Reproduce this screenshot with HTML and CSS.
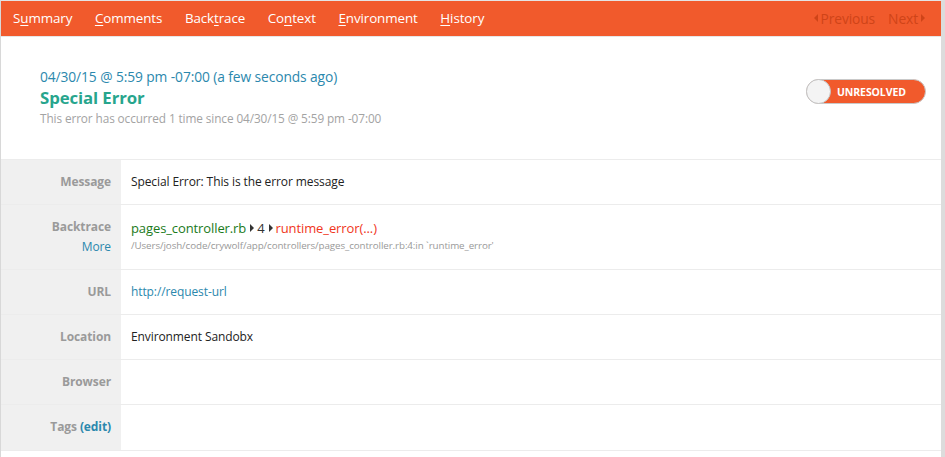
FILE: index.html
```html
<!DOCTYPE html>
<html>
<head>
<meta charset="utf-8">
<link rel="stylesheet" href="styles.css">
</head>
<body>
<div class="page">
  <nav class="tabs">
    <div class="tab-list">
      <a class="tab">S<u>u</u>mmary</a>
      <a class="tab"><u>C</u>omments</a>
      <a class="tab">Back<u>t</u>race</a>
      <a class="tab">Co<u>n</u>text</a>
      <a class="tab"><u>E</u>nvironment</a>
      <a class="tab"><u>H</u>istory</a>
    </div>
    <div class="pager">
      <span class="pager-link"><span class="tri tri-left"></span>Previous</span>
      <span class="pager-link">Next<span class="tri tri-right"></span></span>
    </div>
  </nav>
  <section class="summary">
    <div class="summary-text">
      <div class="when">04/30/15 @ 5:59 pm -07:00 (a few seconds ago)</div>
      <h1 class="title">Special Error</h1>
      <div class="occurred">This error has occurred 1 time since 04/30/15 @ 5:59 pm -07:00</div>
    </div>
    <div class="toggle">
      <span class="knob"></span>
      <span class="toggle-label">UNRESOLVED</span>
    </div>
  </section>
  <div class="details">
    <div class="row">
      <div class="label">Message</div>
      <div class="value">Special Error: This is the error message</div>
    </div>
    <div class="row row-tall">
      <div class="label">Backtrace<br><a class="more">More</a></div>
      <div class="value">
        <div class="trace"><span class="file">pages_controller.rb</span><span class="tri tri-right dark"></span><span class="line">4</span><span class="tri tri-right dark"></span><span class="method">runtime_error(...)</span></div>
        <div class="path">/Users/josh/code/crywolf/app/controllers/pages_controller.rb:4:in `runtime_error'</div>
      </div>
    </div>
    <div class="row">
      <div class="label">URL</div>
      <div class="value"><a class="link">http://request-url</a></div>
    </div>
    <div class="row">
      <div class="label">Location</div>
      <div class="value">Environment Sandobx</div>
    </div>
    <div class="row">
      <div class="label">Browser</div>
      <div class="value"></div>
    </div>
    <div class="row">
      <div class="label">Tags <a class="edit">(edit)</a></div>
      <div class="value"></div>
    </div>
  </div>
</div>
</body>
</html>
```

FILE: styles.css
```css
* { box-sizing: border-box; }
html, body { margin: 0; padding: 0; background: #fff; }
body {
  font-family: "Open Sans", "Liberation Sans", sans-serif;
  font-size: 12px;
  color: #222;
}
.page {
  width: 945px;
  height: 457px;
  border-top: 1px solid #e4e4e4;
  border-left: 1px solid #d8d8d8;
  border-right: 4px solid #dcdcdc;
  overflow: hidden;
}
.tabs {
  height: 36px;
  background: #f15a2c;
  display: flex;
  align-items: center;
  justify-content: space-between;
  padding: 0 16px 1px 12px;
  border-bottom: 1px solid #e6e6e6;
}
.tab-list { display: flex; gap: 0; }
.tab {
  color: #fff;
  font-size: 13.4px;
  font-weight: 500;
  letter-spacing: -0.1px;
  margin-right: 22.6px;
  text-decoration: none;
}
.tab u { text-decoration: underline; text-underline-offset: 2px; }
.pager { display: flex; gap: 13px; color: #cf4418; font-size: 13.8px; letter-spacing: -0.1px; }
.pager-link { display: flex; align-items: center; }
.tri {
  display: inline-block;
  width: 0; height: 0;
  border-top: 4px solid transparent;
  border-bottom: 4px solid transparent;
}
.tri-left { border-right: 4px solid #cf4418; margin-right: 3px; }
.tri-right { border-left: 4px solid #cf4418; margin-left: 3px; }
.tri.dark { border-left-color: #333; margin: 0 3px 0 4px; }

.summary {
  height: 123px;
  display: flex;
  align-items: flex-start;
  justify-content: space-between;
  padding: 0 15px 0 39px;
  border-bottom: 1px solid #ececec;
}
.summary-text { margin-top: 30px; }
.when { color: #2b88ad; font-size: 13.8px; line-height: 20px; letter-spacing: -0.1px; }
.title { margin: 0; color: #27a58d; font-size: 16.8px; font-weight: 700; line-height: 21px; letter-spacing: -0.1px; }
.occurred { color: #a3a3a3; font-size: 11.8px; line-height: 20px; letter-spacing: -0.1px; }

.toggle {
  width: 120px;
  height: 25px;
  border-radius: 13px;
  background: #f15a2c;
  border: 1px solid #c9c9c9;
  display: flex;
  align-items: center;
  margin-top: 42px;
}
.knob {
  width: 25px; height: 25px;
  border-radius: 50%;
  background: #f4f4f4;
  border: 1px solid #c4c4c4;
  margin-left: -1px;
}
.toggle-label { color: #fff; font-weight: 700; font-size: 10.5px; margin-left: 6px; letter-spacing: -0.1px; }

.details { border-bottom: 1px solid #ececec; }
.row {
  display: flex;
  height: 45px;
  border-bottom: 1px solid #ececec;
}
.row:last-child { border-bottom: none; }
.row-tall { height: 65px; }
.label {
  width: 120px;
  background: #f0f0f0;
  color: #9a9a9a;
  font-weight: 700;
  font-size: 12px;
  text-align: right;
  padding: 14px 10px 0 0;
  line-height: 16px;
  letter-spacing: -0.1px;
}
.row-tall .label { line-height: 20px; padding-top: 12px; }
.more { color: #2b88ad; font-weight: 400; }
.edit { color: #2b88ad; }
.value {
  flex: 1;
  padding: 14px 10px 0 10px;
  line-height: 16px;
  color: #222;
  font-size: 12px;
  letter-spacing: -0.1px;
}
.row-tall .value { padding-top: 13px; }
.trace { display: flex; align-items: center; font-size: 13px; line-height: 20px; }
.file { color: #1a7a1a; }
.line { color: #333; }
.method { color: #f0361c; }
.path { color: #999; font-size: 9.8px; line-height: 16px; }
.link { color: #2b88ad; }
```
